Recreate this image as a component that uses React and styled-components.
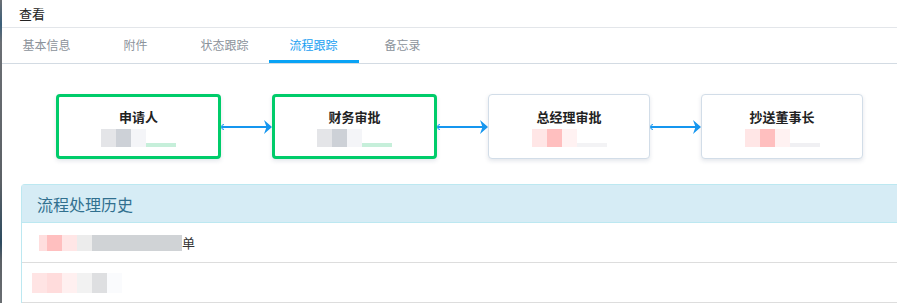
import React from "react";
import styled, { createGlobalStyle } from "styled-components";

const GlobalStyle = createGlobalStyle`
  html, body {
    margin: 0;
    padding: 0;
    background: #ffffff;
    font-family: "Noto Sans CJK SC", "Noto Sans", sans-serif;
  }
`;

const Page = styled.div`
  display: flex;
  width: 897px;
  height: 303px;
  overflow: hidden;
`;

const EdgeStrip = styled.div`
  width: 2px;
  flex-shrink: 0;
  background: linear-gradient(
    180deg,
    #6b6f74 0%,
    #3b5f7a 8%,
    #6b6f74 14%,
    #5c6166 60%,
    #2d4b60 80%,
    #5c6166 86%,
    #6a6e72 100%
  );
`;

const Main = styled.div`
  flex: 1;
  min-width: 0;
  display: flex;
  flex-direction: column;
  overflow: hidden;

  & > * {
    flex-shrink: 0;
  }
`;

const TitleBar = styled.div`
  height: 27px;
  display: flex;
  align-items: center;
  padding-left: 17px;
  font-size: 13px;
  color: #222;
  border-bottom: 1px solid #e3e6ea;
`;

const TabBar = styled.div`
  display: flex;
  height: 35px;
  border-bottom: 1px solid #d3dbe3;
`;

const Tab = styled.div`
  width: 89px;
  position: relative;
  display: flex;
  align-items: center;
  justify-content: center;
  padding-bottom: 3px;
  font-size: 12px;
  color: ${(p) => (p.$active ? "#19a0f2" : "#8c939b")};

  &::after {
    content: "";
    display: ${(p) => (p.$active ? "block" : "none")};
    position: absolute;
    left: 0;
    right: -1px;
    bottom: 0;
    height: 3px;
    background: #09a3f5;
  }
`;

const Flow = styled.div`
  display: flex;
  align-items: center;
  padding: 30px 0 0 54px;
`;

const Node = styled.div`
  width: ${(p) => (p.$done ? 159 : 160)}px;
  height: ${(p) => (p.$done ? 48 : 50)}px;
  flex-shrink: 0;
  border-radius: 4px;
  border: ${(p) => (p.$done ? "3px solid #00cc6a" : "1px solid #d2dde8")};
  box-shadow: 0 2px 4px rgba(60, 80, 110, 0.14);
  background: #fff;
  display: flex;
  flex-direction: column;
  align-items: center;
  padding-top: ${(p) => (p.$done ? 11 : 13)}px;
  box-sizing: content-box;
`;

const NodeTitle = styled.div`
  font-size: 13px;
  font-weight: 700;
  color: #222;
  line-height: 18px;
`;

const Blur = styled.div`
  display: flex;
  margin-top: ${(p) => p.$top || 0}px;
  filter: blur(0.6px);
`;

const Chip = styled.span`
  display: block;
  width: ${(p) => p.$w}px;
  height: ${(p) => p.$h || 16}px;
  background: ${(p) => p.$c};
`;

const Connector = styled.svg`
  width: 51px;
  height: 16px;
  flex-shrink: 0;
  display: block;
`;

const Panel = styled.div`
  margin: 25px 0 0 19px;
  border: 1px solid #bce8f1;
  border-right: none;
  border-bottom: none;
  border-radius: 4px 0 0 0;
  height: 140px;
`;

const PanelHead = styled.div`
  height: 37px;
  display: flex;
  align-items: center;
  padding-left: 15px;
  background: #d6ecf5;
  border-bottom: 1px solid #bce8f1;
  font-size: 16px;
  color: #31708f;
`;

const Row = styled.div`
  height: 39px;
  display: flex;
  align-items: center;
  padding-left: ${(p) => p.$pad}px;
  border-bottom: 1px solid #dddddd;
  font-size: 13px;
  color: #333;
`;

function Arrow() {
  return (
    <Connector viewBox="0 0 51 16">
      <path d="M3 5.5 A2.5 2.5 0 0 0 3 10.5" fill="none" stroke="#1596ef" strokeWidth="1" />
      <line x1="1" y1="8" x2="46" y2="8" stroke="#1596ef" strokeWidth="2" />
      <path d="M43 1 L51 8 L43 15 L45.5 8 Z" fill="#1596ef" />
    </Connector>
  );
}

const grey = ["#e4e5e8", "#cdd1d7", "#f4f5f8"];
const pink = ["#ffe6e6", "#ffbfbf", "#fff2f2"];

const nodes = [
  { title: "申请人", done: true, chips: grey, under: "#c6efda" },
  { title: "财务审批", done: true, chips: grey, under: "#c6efda" },
  { title: "总经理审批", done: false, chips: pink, under: "#f3f3f5" },
  { title: "抄送董事长", done: false, chips: pink, under: "#f0f0f3" },
];

export default function App() {
  const tabs = ["基本信息", "附件", "状态跟踪", "流程跟踪", "备忘录"];
  return (
    <>
      <GlobalStyle />
      <Page>
        <EdgeStrip />
        <Main>
          <TitleBar>查看</TitleBar>
          <TabBar>
            {tabs.map((t) => (
              <Tab key={t} $active={t === "流程跟踪"}>
                {t}
              </Tab>
            ))}
          </TabBar>
          <Flow>
            {nodes.map((n, i) => (
              <React.Fragment key={n.title}>
                {i > 0 && <Arrow />}
                <Node $done={n.done}>
                  <NodeTitle>{n.title}</NodeTitle>
                  <Blur $top={3}>
                    {n.chips.map((c, k) => (
                      <Chip key={k} $w={15} $h={18} $c={c} />
                    ))}
                    <Chip $w={30} $h={4} $c={n.under} style={{ alignSelf: "flex-end" }} />
                  </Blur>
                </Node>
              </React.Fragment>
            ))}
          </Flow>
          <Panel>
            <PanelHead>流程处理历史</PanelHead>
            <Row $pad={17}>
              <Blur>
                <Chip $w={8} $c="#ffdede" />
                <Chip $w={15} $c="#ffbfbf" />
                <Chip $w={15} $c="#ffe6e6" />
                <Chip $w={15} $c="#ececec" />
                <Chip $w={90} $c="#d0d3d6" />
              </Blur>
              <span>单</span>
            </Row>
            <Row $pad={10}>
              <Blur>
                <Chip $w={15} $h={20} $c="#ffe4e4" />
                <Chip $w={15} $h={20} $c="#ffdcdc" />
                <Chip $w={15} $h={20} $c="#fff0f0" />
                <Chip $w={15} $h={20} $c="#f2f2f2" />
                <Chip $w={15} $h={20} $c="#dedfe1" />
                <Chip $w={15} $h={20} $c="#fafbfd" />
              </Blur>
            </Row>
          </Panel>
        </Main>
      </Page>
    </>
  );
}
